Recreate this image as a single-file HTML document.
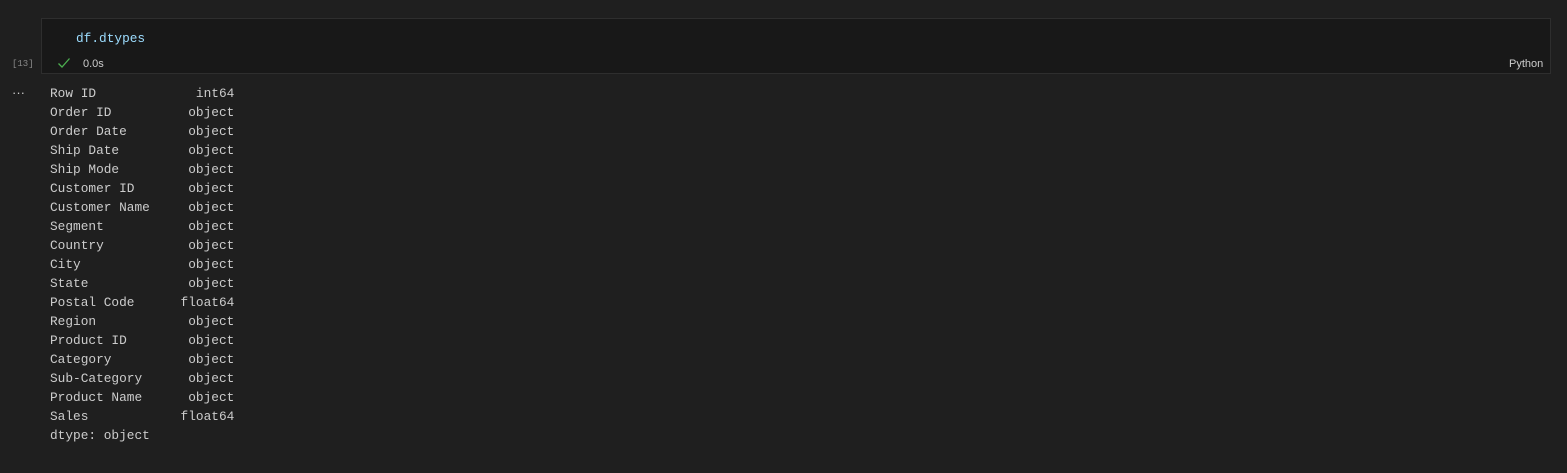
<!DOCTYPE html>
<html><head><style>
body{margin:0;background:#1f1f1f;width:1567px;height:473px;overflow:hidden;position:relative;font-family:"Liberation Sans",sans-serif}
.cell{position:absolute;left:41px;top:18px;width:1508px;height:54px;background:#181818;border:1px solid #2e2e2e}
.code{position:absolute;left:76px;top:31px;font-family:"Liberation Mono",monospace;font-size:12.8px;color:#9cdcfe}
.cnt{position:absolute;left:12px;top:59px;font-family:"Liberation Mono",monospace;font-size:9px;color:#8a8a8a}
.chk{position:absolute;left:57px;top:57px}
.time{position:absolute;left:83px;top:58px;font-size:11px;color:#ccc}
.py{position:absolute;left:1509px;top:58px;font-size:11px;color:#ccc}
.dots{position:absolute;left:12px;top:85px;color:#ccc;font-size:13px}
pre{position:absolute;left:50px;top:84px;margin:0;font-family:"Liberation Mono",monospace;font-size:12.8px;line-height:19px;color:#cccccc}
</style></head><body>
<div class="cell"></div>
<div class="code">df.dtypes</div>
<div class="cnt">[13]</div>
<svg class="chk" width="14" height="12" viewBox="0 0 14 12"><path d="M1.5 6.5 L5 10 L12.5 1.5" fill="none" stroke="#4caf50" stroke-width="1.3"/></svg>
<div class="time">0.0s</div>
<div class="py">Python</div>
<div class="dots">···</div>
<pre>Row ID             int64
Order ID          object
Order Date        object
Ship Date         object
Ship Mode         object
Customer ID       object
Customer Name     object
Segment           object
Country           object
City              object
State             object
Postal Code      float64
Region            object
Product ID        object
Category          object
Sub-Category      object
Product Name      object
Sales            float64
dtype: object</pre>
</body></html>
